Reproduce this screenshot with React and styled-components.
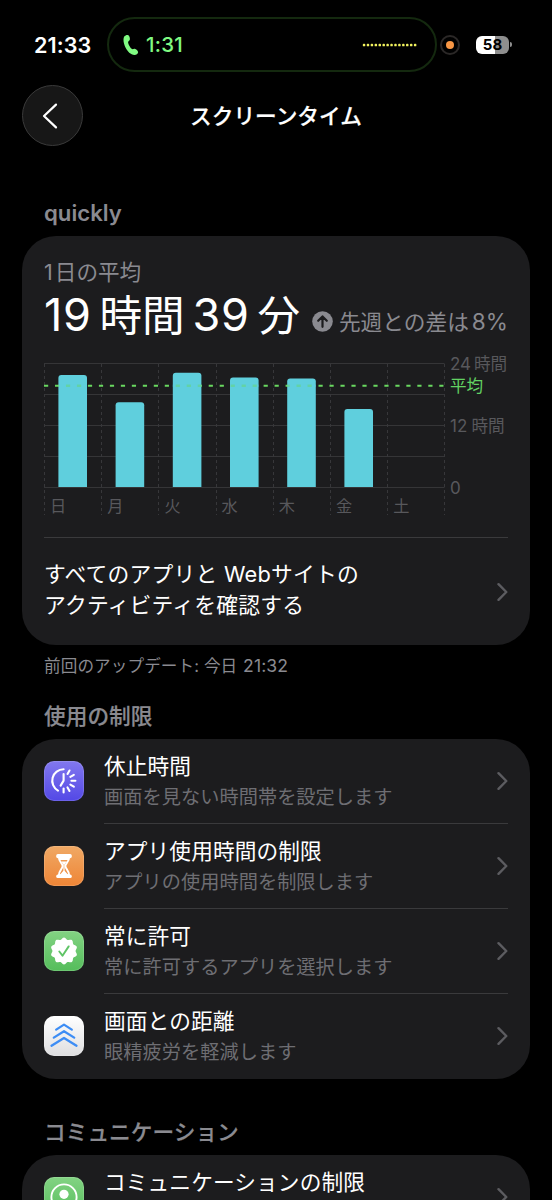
import React from 'react';
import styled, { createGlobalStyle } from 'styled-components';

const GlobalStyle = createGlobalStyle`
    html, body {
        margin: 0;
        background: #000;
    }

    body {
        height: 1200px;
        overflow: hidden;
        font-family: Inter, 'Noto Sans CJK JP', sans-serif;
        color: #fff;
    }

    * {
        box-sizing: border-box;
    }

    svg {
        display: block;
        flex-shrink: 0;
    }
`;

const Screen = styled.main`
    width: 552px;
    height: 1200px;
    overflow: hidden;
    background: #000;
`;

/* ---------- status bar ---------- */

const StatusBar = styled.div`
    display: flex;
    align-items: center;
    height: 85px;
    padding: 4px 0 0 34px;
`;

const Clock = styled.div`
    width: 73px;
    font-size: 21.6px;
    font-weight: 600;
    line-height: 24px;
    letter-spacing: 0.1px;
`;

const CallPill = styled.div`
    display: flex;
    align-items: center;
    width: 330px;
    height: 55px;
    padding: 0 17px 0 14px;
    border: 2px solid #14290f;
    border-radius: 28px;
`;

const CallTime = styled.span`
    flex: 1;
    margin-left: 7px;
    font-size: 20.4px;
    font-weight: 500;
    line-height: 24px;
    letter-spacing: 0.3px;
    color: #80fa82;
`;

const MicIndicator = styled.div`
    display: flex;
    align-items: center;
    justify-content: center;
    width: 20px;
    height: 20px;
    margin-left: 3px;
    border: 2px solid #2b2827;
    border-radius: 50%;

    &::before {
        content: '';
        width: 8px;
        height: 8px;
        border-radius: 50%;
        background: #f79644;
    }
`;

const Battery = styled.div`
    display: flex;
    align-items: center;
    margin-left: 16px;
`;

const BatteryBody = styled.div`
    width: 33px;
    height: 18px;
    border-radius: 6px;
    background: linear-gradient(to right, #fff 58%, #8e8e8e 58%);
    font-size: 15px;
    font-weight: 700;
    line-height: 18px;
    text-align: center;
    color: #000;
`;

const BatteryCap = styled.div`
    width: 2px;
    height: 5px;
    margin-left: 1px;
    border-radius: 0 2px 2px 0;
    background: #8e8e8e;
`;

/* ---------- navigation ---------- */

const NavBar = styled.header`
    display: grid;
    grid-template-columns: 61px 1fr 61px;
    align-items: center;
    height: 61px;
    padding: 0 22px;
`;

const BackButton = styled.button`
    display: flex;
    align-items: center;
    justify-content: center;
    width: 61px;
    height: 61px;
    padding: 0 5px 0 0;
    border: 1px solid #3a3a3a;
    border-radius: 50%;
    background: #171717;
`;

const NavTitle = styled.h1`
    margin: 0;
    font-size: 21.7px;
    font-weight: 500;
    line-height: 30px;
    text-align: center;
    -webkit-text-stroke: 0.2px currentColor;
`;

/* ---------- sections ---------- */

const SectionTitle = styled.h2`
    margin: ${({ $top }) => $top}px 0 ${({ $bottom }) => $bottom}px 44px;
    font-size: 21.7px;
    font-weight: 500;
    line-height: 28px;
    color: #8a8a90;
    -webkit-text-stroke: 0.2px currentColor;
`;

const ProfileName = styled(SectionTitle)`
    font-size: 22.2px;
    font-weight: 600;
    -webkit-text-stroke: 0;
`;

const Card = styled.section`
    width: 508px;
    margin-left: 22px;
    border-radius: 34px;
    background: #1c1c1e;
`;

const Footnote = styled.p`
    margin: 9px 0 0 44px;
    font-size: 16.6px;
    line-height: 24px;
    letter-spacing: 0.1px;
    color: #8a8a90;

    span {
        margin-left: 1px;
        font-size: 17.6px;
    }
`;

const SummaryCard = styled(Card)`
    height: 409px;
    padding: 22px 22px 0;
`;

const AverageLabel = styled.div`
    font-size: 21.6px;
    line-height: 28px;
    color: #8a8a90;

    span {
        margin-right: 2px;
    }
`;

const AverageRow = styled.div`
    display: flex;
    align-items: baseline;
    height: 58px;
    white-space: nowrap;
`;

const BigTime = styled.div`
    display: flex;
    align-items: baseline;
    gap: 8px;
    width: 257px;
    font-size: 42.6px;
    line-height: 58px;
`;

const BigNumber = styled.span`
    font-size: 45px;
    letter-spacing: 0.6px;
`;

const Trend = styled.div`
    display: flex;
    align-items: center;
    gap: 6px;
    margin-left: 11px;
    font-size: 21.7px;
    line-height: 28px;
    color: #8a8a90;
    transform: translateY(1px);

    b {
        margin-left: 3px;
        font-size: 22.6px;
        font-weight: 400;
    }
`;

const ChartBox = styled.div`
    height: 180px;
    margin-top: 14px;
    border-bottom: 1px solid #3a3a3c;

    svg {
        overflow: visible;
    }
`;

const ActivityLink = styled.a`
    display: flex;
    align-items: center;
    justify-content: space-between;
    height: 107px;
    font-size: 21.8px;
    line-height: 31px;
    letter-spacing: 0.2px;

    span {
        margin-bottom: 4px;
    }
`;

const Row = styled.div`
    display: flex;
    align-items: center;
    height: 85px;
    padding-left: 22px;
`;

const RowContent = styled.div`
    display: flex;
    align-items: center;
    justify-content: space-between;
    flex: 1;
    height: 85px;
    margin: 0 22px 0 20px;
    border-bottom: 1px solid ${({ $last }) => ($last ? 'transparent' : '#3a3a3c')};
`;

const RowText = styled.div`
    height: 60px;
`;

const RowTitle = styled.div`
    font-size: 21.7px;
    line-height: 31px;
    letter-spacing: 0.1px;
`;

const RowNote = styled.div`
    font-size: 19.2px;
    line-height: 30px;
    letter-spacing: 0.05px;
    color: #6e6e73;
`;

const IconTile = styled.div`
    display: flex;
    align-items: center;
    justify-content: center;
    width: 40px;
    height: 40px;
    margin-bottom: 1px;
    border-radius: 10px;
    background: ${({ $bg }) => $bg};
    box-shadow: inset 0 0 0 1px rgba(255, 255, 255, 0.14);
`;

/* ---------- drawings ---------- */

const Chevron = () => (
    <svg width="11" height="20" viewBox="0 0 11 20" fill="none">
        <path d="M1.5 2.2 9.3 10l-7.8 7.8" stroke="#5c5c60" strokeWidth="2.4" strokeLinecap="round" strokeLinejoin="round" />
    </svg>
);

const PhoneIcon = () => (
    <svg width="16" height="22" viewBox="0 0 16 22" fill="#80fa82">
        <path d="M1.2 2.5C2.4 1 4.4.5 5.4 1.2C6.6 2.1 7.2 4.5 6.7 6C6.4 6.9 5.2 7.3 5.1 8.2C5 9.9 7.5 14.3 9 15.1C9.9 15.5 10.7 14.6 11.7 14.8C13.2 15.1 15 16.8 15.1 18.2C15.2 19.7 13.3 21 11.5 21C7.5 20.9 4.5 17.5 2.5 13.6C.6 9.8-.2 5 1.2 2.5Z" />
    </svg>
);

const dots = Array.from({ length: 14 }, (_, i) => i);

const VoiceDots = () => (
    <svg width="56" height="4" viewBox="0 0 56 4" fill="#f2f25e">
        {dots.map((i) => (
            <rect key={i} x={0.8 + i * 3.93} y="0.8" width="2.5" height="2.5" rx="0.9" />
        ))}
    </svg>
);

const rays = [-60, -30, 0, 30, 60, 90];

const DowntimeIcon = () => (
    <svg width="40" height="40" viewBox="0 0 40 40" fill="none" stroke="#fff" strokeWidth="2.1" strokeLinecap="round" strokeLinejoin="round">
        <path d="M19.6 8.3A11.4 11.4 0 0 0 14 29.6" />
        <path d="M19.6 13v6.6L16.6 24.6" />
        {rays.map((a) => (
            <path key={a} d="M27.4 19.7h4" transform={`rotate(${a} 19.6 19.7)`} />
        ))}
    </svg>
);

const HourglassIcon = () => (
    <svg width="40" height="40" viewBox="0 0 40 40" fill="#fff">
        <path d="M14.8 11C14.8 16 18.6 17.2 18.6 20S14.8 24.500 14.8 29.500H25.200C25.200 24.500 21.400 22.800 21.400 20S25.200 16 25.200 11Z" fill="none" stroke="#fff" strokeWidth="1.9" />
        <rect x="12.2" y="8" width="15.6" height="4.2" rx="1.7" />
        <rect x="12.2" y="28.6" width="15.6" height="3.4" rx="1.6" />
        <path d="M14.800 11h10.400l-.7 3h-9Z" />
        <path d="M17.4 15.6h5.200L20.600 18.600v6.200l3.600 4.200h-8.400l3.600-4.200v-6.200Z" />
    </svg>
);

const TEETH = 10;

const badgePoints = Array.from({ length: 120 }, (_, i) => {
    const a = (i * Math.PI) / 60 - Math.PI / 2;
    const r = 12.5 + 0.95 * Math.cos((a + Math.PI / 2) * TEETH);
    return `${20 + r * Math.cos(a)},${20 + r * Math.sin(a)}`;
}).join(' ');

const AllowedIcon = () => (
    <svg width="40" height="40" viewBox="0 0 40 40" fill="none" strokeLinecap="round" strokeLinejoin="round">
        <polygon points={badgePoints} fill="#fff" />
        <path d="M15.3 20.5l3.200 4.200 6.200-9.300" stroke="#5fc466" strokeWidth="1.9" />
    </svg>
);

const DistanceIcon = () => (
    <svg width="40" height="40" viewBox="0 0 40 40" fill="none" stroke="#3d8df5" strokeWidth="2.3" strokeLinecap="round" strokeLinejoin="round">
        <path d="M12.2 13.6l7.800-5 7.800 5M9.800 21.600L20 15.200l10.200 6.400M7.500 29.700L20 21.900l12.500 7.800" />
    </svg>
);

const ContactIcon = () => (
    <svg width="40" height="40" viewBox="0 0 40 40">
        <circle cx="20" cy="20" r="12.6" fill="none" stroke="#fff" strokeWidth="1.9" />
        <circle cx="20" cy="17.3" r="4.6" fill="#fff" />
        <path d="M11.5 28.5c1.500-3.800 4.500-5 8.500-5s7 1.200 8.500 5a12 12 0 0 1-17 0Z" fill="#fff" />
    </svg>
);

const UpBadge = () => (
    <svg width="21" height="21" viewBox="0 0 21 21" fill="none">
        <circle cx="10.5" cy="10.5" r="10.3" fill="#8a8a90" />
        <path d="M10.5 15.8V6M6.2 9.8l4.300-4.400 4.300 4.400" stroke="#1c1c1e" strokeWidth="2.2" strokeLinecap="round" strokeLinejoin="round" />
    </svg>
);

const days = [
    { label: '日', hours: 21.7 },
    { label: '月', hours: 16.4 },
    { label: '火', hours: 22.1 },
    { label: '水', hours: 21.2 },
    { label: '木', hours: 21 },
    { label: '金', hours: 15.1 },
    { label: '土', hours: 0 },
];

const PLOT_HEIGHT = 124;
const COLUMN = 57.2;

const UsageChart = () => (
    <svg width="464" height="160" viewBox="0 0 464 160" fontSize="16.6">
        {[0, 1, 2, 3, 4].map((i) => (
            <path key={i} d={`M0 ${5.5 + i * 31}H400.5`} stroke="#353537" />
        ))}
        {[0, 1, 2, 3, 4, 5, 6, 7].map((i) => (
            <path key={i} d={`M${Math.round(i * COLUMN) + 0.5} 6V157`} stroke="#37373a" strokeDasharray="3 3" />
        ))}
        {days.map(({ label, hours }, i) => {
            const x = i * COLUMN + 14.4;
            const h = (hours / 24) * PLOT_HEIGHT;
            return (
                <g key={label}>
                    {h > 0 && (
                        <path d={`M${x} 129v${3 - h}q0-3 3-3h22.6q3 0 3 3V129Z`} fill="#5fcfdd" />
                    )}
                    <text x={i * COLUMN + 6} y="154" fontSize="16.2" fill="#58585c">{label}</text>
                </g>
            );
        })}
        <path d="M0 27.7H401" stroke="#69d860" strokeWidth="2" strokeDasharray="4.2 6.78" />
        {/* the average line fades where it crosses a bar */}
        {days.map(({ label, hours }, i) => hours > 19.6 && (
            <path key={label} d={`M${i * COLUMN + 14.4} 27.7h28.6`} stroke="#5fcfdd" strokeWidth="2.2" opacity="0.55" />
        ))}
        <text x="406" y="12" fontSize="17" fill="#58585c">24</text>
        <text x="430" y="12" fill="#58585c">時間</text>
        <text x="406" y="34" fill="#62d262">平均</text>
        <text x="406" y="74" fontSize="17" fill="#58585c">12</text>
        <text x="427.5" y="74" fill="#58585c">時間</text>
        <text x="406" y="135.5" fontSize="17" fill="#58585c">0</text>
    </svg>
);

const limits = [
    { title: '休止時間', note: '画面を見ない時間帯を設定します', bg: 'linear-gradient(#8278ee, #5348e6)', icon: <DowntimeIcon /> },
    { title: 'アプリ使用時間の制限', note: 'アプリの使用時間を制限します', bg: 'linear-gradient(#f0a965, #ee8536)', icon: <HourglassIcon /> },
    { title: '常に許可', note: '常に許可するアプリを選択します', bg: 'linear-gradient(#83d383, #55bd5b)', icon: <AllowedIcon /> },
    { title: '画面との距離', note: '眼精疲労を軽減します', bg: 'linear-gradient(#ffffff, #dedee0)', icon: <DistanceIcon /> },
];

const communication = [
    { title: 'コミュニケーションの制限', bg: 'linear-gradient(#83d383, #55bd5b)', icon: <ContactIcon /> },
];

const SettingsList = ({ items }) => (
    <Card>
        {items.map(({ title, note, bg, icon }, i) => (
            <Row key={title}>
                <IconTile $bg={bg}>{icon}</IconTile>
                <RowContent $last={i === items.length - 1}>
                    <RowText>
                        <RowTitle>{title}</RowTitle>
                        {note && <RowNote>{note}</RowNote>}
                    </RowText>
                    <Chevron />
                </RowContent>
            </Row>
        ))}
    </Card>
);

const App = () => {
    return (
        <>
            <GlobalStyle />
            <Screen>
                <StatusBar>
                    <Clock>21:33</Clock>
                    <CallPill>
                        <PhoneIcon />
                        <CallTime>1:31</CallTime>
                        <VoiceDots />
                    </CallPill>
                    <MicIndicator />
                    <Battery>
                        <BatteryBody>58</BatteryBody>
                        <BatteryCap />
                    </Battery>
                </StatusBar>
                <NavBar>
                    <BackButton aria-label="戻る">
                        <svg width="16" height="26" viewBox="0 0 16 26" fill="none">
                            <path d="M14 1.6 2 13l12 11.4" stroke="#fff" strokeWidth="2.2" strokeLinecap="round" strokeLinejoin="round" />
                        </svg>
                    </BackButton>
                    <NavTitle>スクリーンタイム</NavTitle>
                </NavBar>

                <ProfileName $top={53} $bottom={9}>quickly</ProfileName>
                <SummaryCard>
                    <AverageLabel><span>1</span>日の平均</AverageLabel>
                    <AverageRow>
                        <BigTime>
                            <BigNumber>19</BigNumber>
                            <span>時間</span>
                            <BigNumber>39</BigNumber>
                            <span>分</span>
                        </BigTime>
                        <Trend>
                            <UpBadge />
                            <span>先週との差は<b>8%</b></span>
                        </Trend>
                    </AverageRow>
                    <ChartBox>
                        <UsageChart />
                    </ChartBox>
                    <ActivityLink>
                        <span>すべてのアプリと Webサイトの<br />アクティビティを確認する</span>
                        <Chevron />
                    </ActivityLink>
                </SummaryCard>
                <Footnote>前回のアップデート: 今日 <span>21:32</span></Footnote>

                <SectionTitle $top={24} $bottom={9}>使用の制限</SectionTitle>
                <SettingsList items={limits} />

                <SectionTitle $top={39} $bottom={9}>コミュニケーション</SectionTitle>
                <SettingsList items={communication} />
            </Screen>
        </>
    );
};

export default App;
